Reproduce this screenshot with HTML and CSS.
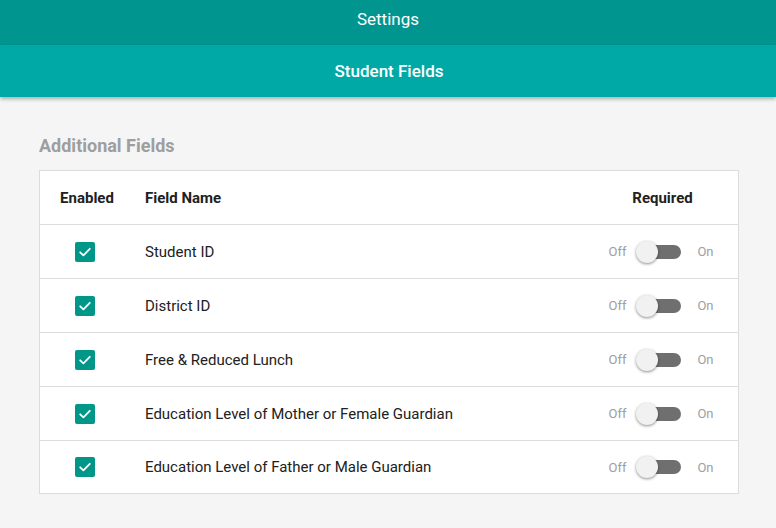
FILE: index.html
```html
<!DOCTYPE html>
<html>
<head>
<meta charset="utf-8">
<link rel="stylesheet" href="styles.css">
</head>
<body>
<header class="topbar">Settings</header>
<div class="subbar">Student Fields</div>
<main class="content">
  <h2 class="section-title">Additional Fields</h2>
  <div class="table">
    <div class="row head">
      <div class="c-enabled">Enabled</div>
      <div class="c-name">Field Name</div>
      <div class="c-req">Required</div>
    </div>
    <div class="row">
      <div class="c-enabled"><span class="check"><svg viewBox="0 0 20 20" width="20" height="20"><path d="M5.2 10.3l3.2 3.1 6.4-6.6" fill="none" stroke="#fff" stroke-width="1.8" stroke-linecap="round" stroke-linejoin="round"/></svg></span></div>
      <div class="c-name">Student ID</div>
      <div class="c-req"><span class="lbl">Off</span><span class="switch"><span class="knob"></span></span><span class="lbl">On</span></div>
    </div>
    <div class="row">
      <div class="c-enabled"><span class="check"><svg viewBox="0 0 20 20" width="20" height="20"><path d="M5.2 10.3l3.2 3.1 6.4-6.6" fill="none" stroke="#fff" stroke-width="1.8" stroke-linecap="round" stroke-linejoin="round"/></svg></span></div>
      <div class="c-name">District ID</div>
      <div class="c-req"><span class="lbl">Off</span><span class="switch"><span class="knob"></span></span><span class="lbl">On</span></div>
    </div>
    <div class="row">
      <div class="c-enabled"><span class="check"><svg viewBox="0 0 20 20" width="20" height="20"><path d="M5.2 10.3l3.2 3.1 6.4-6.6" fill="none" stroke="#fff" stroke-width="1.8" stroke-linecap="round" stroke-linejoin="round"/></svg></span></div>
      <div class="c-name">Free &amp; Reduced Lunch</div>
      <div class="c-req"><span class="lbl">Off</span><span class="switch"><span class="knob"></span></span><span class="lbl">On</span></div>
    </div>
    <div class="row">
      <div class="c-enabled"><span class="check"><svg viewBox="0 0 20 20" width="20" height="20"><path d="M5.2 10.3l3.2 3.1 6.4-6.6" fill="none" stroke="#fff" stroke-width="1.8" stroke-linecap="round" stroke-linejoin="round"/></svg></span></div>
      <div class="c-name">Education Level of Mother or Female Guardian</div>
      <div class="c-req"><span class="lbl">Off</span><span class="switch"><span class="knob"></span></span><span class="lbl">On</span></div>
    </div>
    <div class="row last">
      <div class="c-enabled"><span class="check"><svg viewBox="0 0 20 20" width="20" height="20"><path d="M5.2 10.3l3.2 3.1 6.4-6.6" fill="none" stroke="#fff" stroke-width="1.8" stroke-linecap="round" stroke-linejoin="round"/></svg></span></div>
      <div class="c-name">Education Level of Father or Male Guardian</div>
      <div class="c-req"><span class="lbl">Off</span><span class="switch"><span class="knob"></span></span><span class="lbl">On</span></div>
    </div>
  </div>
</main>
</body>
</html>
```
FILE: styles.css
```css
* { box-sizing: border-box; }
html, body { margin: 0; padding: 0; }
body {
  background: #f5f5f5;
  font-family: Roboto, "Noto Sans", sans-serif;
  color: #212121;
  width: 776px;
  height: 528px;
  overflow: hidden;
}
.topbar {
  height: 45px;
  background: #00968f;
  color: #fff;
  font-size: 17px;
  display: flex;
  align-items: center;
  justify-content: center;
  padding-bottom: 7px;
}
.subbar {
  height: 52px;
  background: #00a9a6;
  color: #fff;
  font-size: 17px;
  font-weight: 500;
  display: flex;
  align-items: center;
  justify-content: center;
  padding-left: 2px;
  box-shadow: 0 2px 4px rgba(0,0,0,0.3);
  position: relative;
}
.content {
  padding: 38px 37px 0 39px;
}
.section-title {
  margin: 0 0 13px;
  font-size: 18px;
  font-weight: 700;
  color: #9e9e9e;
  line-height: 22px;
}
.table {
  width: 700px;
  background: #fff;
  border: 1px solid #dcdcdc;
}
.row {
  display: grid;
  grid-template-columns: 91px 456px 1fr;
  height: 54px;
  align-items: center;
  border-bottom: 1px solid #dcdcdc;
  font-size: 15px;
}
.row.last { border-bottom: none; height: 52px; }
.row.head { font-weight: 700; color: #212121; height: 54px; }
.c-enabled {
  display: flex;
  justify-content: center;
  padding-right: 1px;
}
.head .c-enabled { padding-left: 3px; padding-right: 0; }
.c-name { padding-left: 14px; }
.c-req {
  display: flex;
  align-items: center;
  justify-content: center;
  padding-right: 3px;
}
.head .c-req { padding-right: 0; }
.check {
  width: 20px;
  height: 20px;
  background: #009688;
  border-radius: 2px;
  display: block;
}
.check svg { display: block; }
.lbl {
  font-size: 13px;
  color: #9e9e9e;
}
.switch {
  position: relative;
  width: 41px;
  height: 14px;
  background: #6f6f6f;
  border-radius: 7px;
  margin: 0 16px 0 14px;
}
.knob {
  position: absolute;
  left: -4px;
  top: -4px;
  width: 22px;
  height: 22px;
  border-radius: 50%;
  background: #f1f1f1;
  box-shadow: 0 1px 3px rgba(0,0,0,0.45);
}
```
